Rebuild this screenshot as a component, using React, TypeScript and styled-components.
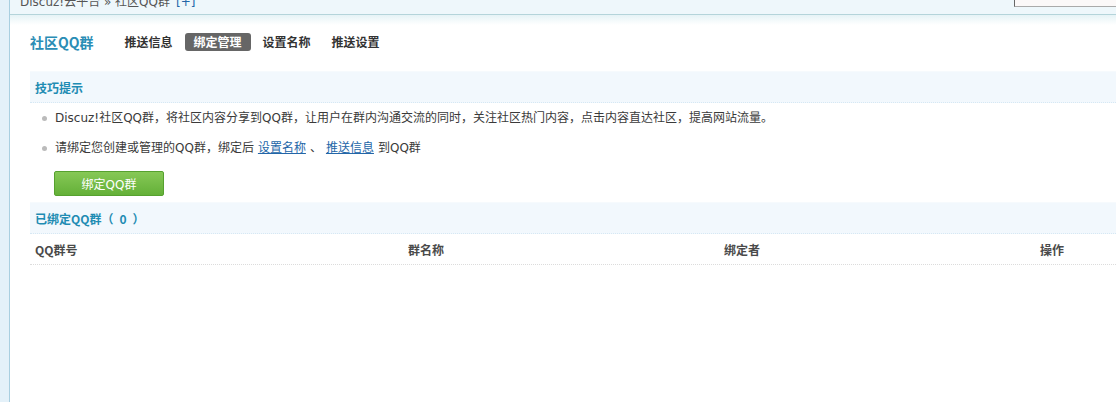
import * as React from 'react';
import styled, {createGlobalStyle} from 'styled-components';

const Global = createGlobalStyle`
  html, body {
    margin: 0;
    padding: 0;
    background: #fff;
  }
  body {
    font: 12px "DejaVu Sans", "Noto Sans CJK SC", sans-serif;
    color: #333;
  }
`;

const Frame = styled.div`
  display: flex;
  min-height: 402px;
`;

const Side = styled.div`
  width: 9px;
  flex-shrink: 0;
  background: #e4f1f9;
  border-right: 1px solid #a9cfe0;
`;

const Main = styled.div`
  flex: 1;
  min-width: 0;
  overflow: hidden;
`;

const TopBar = styled.div`
  display: flex;
  align-items: flex-start;
  height: 14px;
  padding-left: 10px;
  background: #eef7fb;
  border-bottom: 1px solid #b4d4da;
  overflow: hidden;
`;

// the breadcrumb is scrolled half out of view, as in the frame it sits in
const Crumb = styled.div`
  margin-top: -8px;
  line-height: 20px;
  font-size: 12px;
  color: #555;
  white-space: nowrap;

  a {
    color: #2366a8;
    text-decoration: none;
    margin-left: 6px;
  }
`;

const Search = styled.div`
  margin-left: auto;
  margin-right: -20px;
  margin-top: -14px;
  width: 120px;
  height: 19px;
  background: #fbf8f8;
  border: 1px solid #aaa;
  border-top-color: #666;
  border-left-color: #666;
`;

const Fade = styled.div`
  height: 10px;
  background: linear-gradient(to bottom, #e6f3f6, #fff);
`;

const Content = styled.div`
  padding: 8px 0 0 20px;
`;

const Heading = styled.div`
  display: flex;
  align-items: center;
  height: 18px;
`;

const Title = styled.h3`
  margin: 0 22px 0 0;
  font-size: 14px;
  font-weight: bold;
  color: #2a8db5;
  font-family: "Noto Sans CJK SC", sans-serif;
`;

const Tabs = styled.div`
  display: flex;
  gap: 3px;
`;

const Tab = styled.span<{$active?: boolean}>`
  padding: 0 9px;
  line-height: 18px;
  border-radius: 3px;
  font-weight: bold;
  font-family: "Noto Sans CJK SC", sans-serif;
  color: ${p => (p.$active ? '#fff' : '#333')};
  background: ${p => (p.$active ? '#666' : 'transparent')};
`;

const Section = styled.div<{$top: number}>`
  margin-top: ${p => p.$top}px;
  height: 30px;
  display: flex;
  align-items: center;
  padding-left: 5px;
  background: #f2f8fd;
  border-top: 1px solid #f6fafd;
  border-bottom: 1px dotted #d6e8f4;
  font-weight: bold;
  color: #1f8cb3;
  font-family: "Noto Sans CJK SC", sans-serif;
`;

const Count = styled.span`
  margin: 0 6px;
`;

const Tips = styled.ul`
  margin: 0;
  padding: 0 0 0 12px;
  list-style: none;
`;

const Tip = styled.li`
  position: relative;
  padding-left: 13px;
  line-height: 30px;
  color: #3a3a3a;

  &::before {
    content: '';
    position: absolute;
    left: 0;
    top: 13px;
    width: 5px;
    height: 5px;
    border-radius: 50%;
    background: #bbb;
  }

  a {
    color: #2366a8;
    text-decoration: underline;
    margin: 0 4px;
  }
`;

const Button = styled.button`
  display: block;
  margin: 8px 0 0 24px;
  width: 110px;
  height: 25px;
  border: 1px solid #56a12f;
  border-radius: 2px;
  background: linear-gradient(to bottom, #86c856, #64b038);
  color: #fff;
  font: 12px "DejaVu Sans", "Noto Sans CJK SC", sans-serif;
  cursor: pointer;
`;

const HeadRow = styled.div`
  display: grid;
  grid-template-columns: 373px 316px 316px 1fr;
  height: 30px;
  align-items: center;
  padding-left: 5px;
  border-bottom: 1px dotted #dcdcdc;
  font-weight: bold;
  color: #4a4a4a;
  font-family: "Noto Sans CJK SC", sans-serif;
`;

export default function App() {
  return (
    <Frame>
      <Global />
      <Side />
      <Main>
        <TopBar>
          <Crumb>
            Discuz!云平台 » 社区QQ群<a href="#">[+]</a>
          </Crumb>
          <Search />
        </TopBar>
        <Fade />
        <Content>
          <Heading>
            <Title>社区QQ群</Title>
            <Tabs>
              <Tab>推送信息</Tab>
              <Tab $active>绑定管理</Tab>
              <Tab>设置名称</Tab>
              <Tab>推送设置</Tab>
            </Tabs>
          </Heading>
          <Section $top={20}>技巧提示</Section>
          <Tips>
            <Tip>
              Discuz!社区QQ群，将社区内容分享到QQ群，让用户在群内沟通交流的同时，关注社区热门内容，点击内容直达社区，提高网站流量。
            </Tip>
            <Tip>
              请绑定您创建或管理的QQ群，绑定后<a href="#">设置名称</a>、<a href="#">推送信息</a>到QQ群
            </Tip>
          </Tips>
          <Button>绑定QQ群</Button>
          <Section $top={6}>
            已绑定QQ群（<Count>0</Count>）
          </Section>
          <HeadRow>
            <span>QQ群号</span>
            <span>群名称</span>
            <span>绑定者</span>
            <span>操作</span>
          </HeadRow>
        </Content>
      </Main>
    </Frame>
  );
}
